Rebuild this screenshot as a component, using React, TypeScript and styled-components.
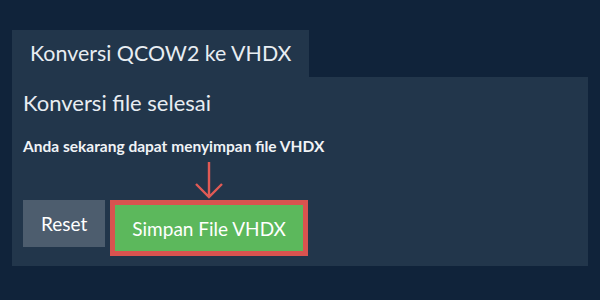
import { FC } from "react";
import styled, { createGlobalStyle } from "styled-components";

const Global = createGlobalStyle`
    body {
        margin: 0;
        background: #10233a;
        font-family: Lato, "Noto Sans", sans-serif;
    }
`;

const Page = styled.div`
    width: 600px;
    height: 300px;
    padding: 30px 12px 0 12px;
    box-sizing: border-box;
    display: flex;
    flex-direction: column;
    align-items: flex-start;
`;

const Tab = styled.div`
    background: #22364b;
    color: #e8edf2;
    font-size: 21.4px;
    height: 47px;
    line-height: 47px;
    padding: 0 18px;
    box-sizing: border-box;
`;

const Panel = styled.div`
    align-self: stretch;
    background: #22364b;
    height: 189px;
    padding: 12px 10px 0 11px;
    box-sizing: border-box;
`;

const Title = styled.div`
    color: #e8edf2;
    font-size: 22px;
    line-height: 28px;
`;

const Message = styled.div`
    color: #f0f3f6;
    font-size: 15.5px;
    font-weight: 700;
    margin-top: 20px;
    line-height: 18px;
`;

const ArrowWrap = styled.div`
    width: 32px;
    height: 38px;
    margin-left: 170px;
    margin-top: 7px;
`;

const Buttons = styled.div`
    display: flex;
    align-items: flex-start;
    gap: 5px;
`;

const Button = styled.button<{ $primary?: boolean }>`
    font-family: Lato, "Noto Sans", sans-serif;
    font-size: 19px;
    color: #ffffff;
    border: ${(p) => (p.$primary ? "5px solid #d9534f" : "none")};
    background: ${(p) => (p.$primary ? "#5cb85c" : "#4d5d6e")};
    height: ${(p) => (p.$primary ? "56px" : "47px")};
    padding: ${(p) => (p.$primary ? "0 17px" : "0 18px")};
    cursor: pointer;
`;

const App: FC = () => {
    return (
        <>
            <Global />
            <Page>
                <Tab>Konversi QCOW2 ke VHDX</Tab>
                <Panel>
                    <Title>Konversi file selesai</Title>
                    <Message>Anda sekarang dapat menyimpan file VHDX</Message>
                    <ArrowWrap>
                        <svg width="32" height="38" viewBox="0 0 32 38">
                            <path d="M16 0 V35 M3 22 L16 35 L29 22" fill="none" stroke="#e05a55" strokeWidth="2.4" />
                        </svg>
                    </ArrowWrap>
                    <Buttons>
                        <Button>Reset</Button>
                        <Button $primary>Simpan File VHDX</Button>
                    </Buttons>
                </Panel>
            </Page>
        </>
    );
};

export default App;
